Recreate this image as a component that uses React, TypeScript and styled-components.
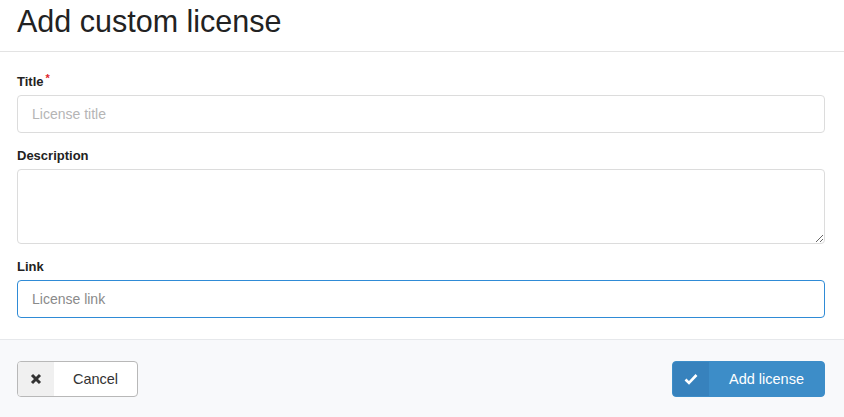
import React from "react";
import styled, { createGlobalStyle } from "styled-components";

const Global = createGlobalStyle`
  html, body { margin: 0; padding: 0; background: #fff; }
  body { font-family: "Liberation Sans", Arial, sans-serif; color: #222; }
  * { box-sizing: border-box; }
`;

const Modal = styled.div`
  width: 844px;
  height: 417px;
  display: flex;
  flex-direction: column;
  background: #fff;
`;

const Header = styled.div`
  height: 52px;
  padding: 0 17px;
  border-bottom: 1px solid #e3e3e3;
  display: flex;
  align-items: center;
`;

const Heading = styled.h1`
  margin: 0;
  margin-top: -8px;
  font-size: 30.5px;
  font-weight: 400;
  color: #222;
`;

const Body = styled.div`
  flex: 1;
  padding: 23px 19px 0 17px;
  display: flex;
  flex-direction: column;
`;

const Field = styled.div`
  display: flex;
  flex-direction: column;
  margin-bottom: 16px;
`;

const Label = styled.label`
  font-size: 13px;
  font-weight: 700;
  color: #222;
  line-height: 14px;
  margin-bottom: 6px;
  display: flex;
`;

const Required = styled.span`
  color: #e0252b;
  font-size: 11px;
  margin-left: 2px;
  margin-top: -4px;
`;

const Input = styled.input<{ $focused?: boolean }>`
  height: 38px;
  width: 100%;
  border: 1px solid ${(p) => (p.$focused ? "#2f8bd6" : "#dcdcdc")};
  border-radius: 4px;
  padding: 0 14px;
  font-family: "Liberation Sans", Arial, sans-serif;
  font-size: 14px;
  color: #222;
  outline: none;
  &::placeholder { color: ${(p) => (p.$focused ? "#8a8a8a" : "#b5b5b5")}; }
`;

const TextArea = styled.textarea`
  height: 75px;
  width: 100%;
  border: 1px solid #dcdcdc;
  border-radius: 4px;
  padding: 10px 14px;
  font-family: "Liberation Sans", Arial, sans-serif;
  font-size: 14px;
  outline: none;
  resize: vertical;
  display: block;
`;

const Footer = styled.div`
  height: 78px;
  background: #f8f9fb;
  border-top: 1px solid #e6e8eb;
  padding: 0 19px 0 17px;
  display: flex;
  align-items: center;
  justify-content: space-between;
`;

const Button = styled.button<{ $primary?: boolean }>`
  height: 36px;
  display: flex;
  align-items: stretch;
  padding: 0;
  border-radius: 4px;
  border: 1px solid ${(p) => (p.$primary ? "#3d8dc8" : "#b8b8b8")};
  background: ${(p) => (p.$primary ? "#3d8dc8" : "#fff")};
  color: ${(p) => (p.$primary ? "#fff" : "#333")};
  font-family: "Liberation Sans", Arial, sans-serif;
  font-size: 14.5px;
  overflow: hidden;
  cursor: pointer;
`;

const IconBox = styled.span<{ $primary?: boolean }>`
  width: 36px;
  display: flex;
  align-items: center;
  justify-content: center;
  background: ${(p) => (p.$primary ? "#3782bd" : "#f0f0f0")};
`;

const ButtonText = styled.span<{ $w: number }>`
  width: ${(p) => p.$w}px;
  display: flex;
  align-items: center;
  justify-content: center;
`;

export default function App() {
  return (
    <>
      <Global />
      <Modal>
        <Header>
          <Heading>Add custom license</Heading>
        </Header>
        <Body>
          <Field>
            <Label>
              Title<Required>*</Required>
            </Label>
            <Input placeholder="License title" />
          </Field>
          <Field>
            <Label>Description</Label>
            <TextArea />
          </Field>
          <Field>
            <Label>Link</Label>
            <Input $focused placeholder="License link" />
          </Field>
        </Body>
        <Footer>
          <Button>
            <IconBox>
              <svg width="12" height="12" viewBox="0 0 12 12">
                <path d="M2 2 L10 10 M10 2 L2 10" stroke="#333" strokeWidth="3" strokeLinecap="butt" />
              </svg>
            </IconBox>
            <ButtonText $w={83}>Cancel</ButtonText>
          </Button>
          <Button $primary>
            <IconBox $primary>
              <svg width="14" height="12" viewBox="0 0 14 12">
                <path d="M1.5 6.5 L5 10 L12.5 2" stroke="#fff" strokeWidth="2.6" fill="none" />
              </svg>
            </IconBox>
            <ButtonText $w={115}>Add license</ButtonText>
          </Button>
        </Footer>
      </Modal>
    </>
  );
}
